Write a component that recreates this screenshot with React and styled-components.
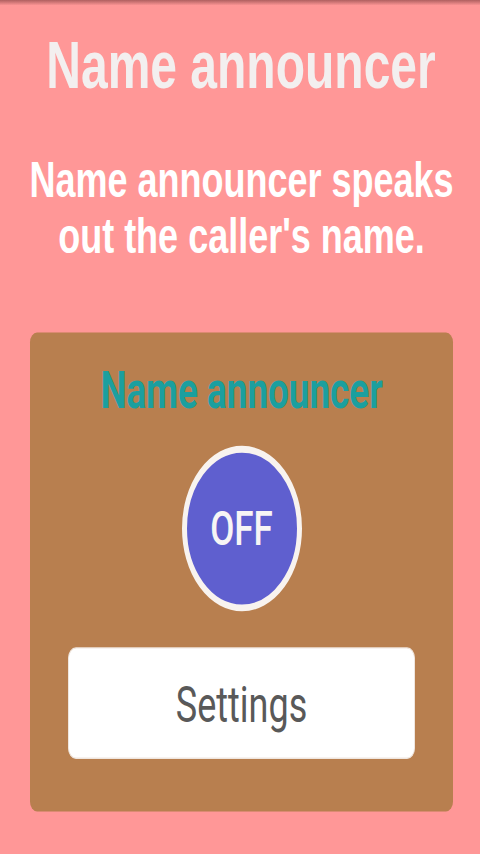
import React from 'react'
import styled, { createGlobalStyle } from 'styled-components'

// the reference is a phone screen stretched vertically, so the layout is
// built at its natural size and stretched by the same amount
const STRETCH = 1.38

const GlobalStyle = createGlobalStyle`
  html {
    overflow: hidden;
  }
  body {
    margin: 0;
    padding: 0;
    min-height: 854px;
    background: #ff9797;
  }
`

const Screen = styled.div`
  width: 480px;
  height: ${854 / STRETCH}px;
  display: flex;
  flex-direction: column;
  align-items: center;
  background: linear-gradient(to bottom, rgba(110, 50, 50, 0.55) 0px, rgba(255, 151, 151, 0) 4px), #ff9797;
  transform: scaleY(${STRETCH});
  transform-origin: top center;
  font-family: "Liberation Sans", Arial, sans-serif;
`

const Title = styled.h1`
  margin: 0;
  padding-top: 20px;
  padding-left: 2px;
  font-size: 48px;
  line-height: 56px;
  font-weight: bold;
  color: #f3efef;
  text-align: center;
`

const Subtitle = styled.p`
  margin: 35px 0 0;
  padding-left: 3px;
  font-size: 36px;
  line-height: 40px;
  font-weight: bold;
  color: #ffffff;
  text-align: center;
`

const Card = styled.section`
  margin: 50px 0 0 3px;
  width: 423px;
  flex-shrink: 0;
  box-sizing: border-box;
  padding: 21px 38px 38px;
  background: #b87f4f;
  border-radius: 7px;
  display: flex;
  flex-direction: column;
  align-items: center;
  font-family: Roboto, "Noto Sans", sans-serif;
`

const CardTitle = styled.h2`
  margin: 0;
  font-size: 37px;
  line-height: 44px;
  font-weight: bold;
  color: #1b9f9f;
  letter-spacing: -0.1px;
`

const Toggle = styled.button`
  margin-top: 17px;
  width: 120px;
  height: 120px;
  flex-shrink: 0;
  box-sizing: border-box;
  border-radius: 50%;
  border: 5px solid #f8f3ef;
  background: ${({ $on }) => ($on ? '#3faf6a' : '#5f5fcf')};
  color: #f7f5f5;
  font-family: Roboto, "Noto Sans", sans-serif;
  font-size: 35px;
  font-weight: 500;
  padding: 0;
  display: flex;
  align-items: center;
  justify-content: center;
`

const SettingsButton = styled.button`
  margin-top: 26px;
  width: 100%;
  height: 81px;
  flex-shrink: 0;
  box-sizing: border-box;
  border: 1px solid #efe6df;
  border-radius: 8px;
  background: #ffffff;
  color: #595959;
  font-family: Roboto, "Noto Sans", sans-serif;
  font-size: 36px;
  font-weight: normal;
  padding: 2px 0 0;
`

function App() {
    const on = false

    return (
        <>
            <GlobalStyle />
            <Screen>
                <Title>Name announcer</Title>
                <Subtitle>
                    Name announcer speaks<br />out the caller's name.
                </Subtitle>
                <Card>
                    <CardTitle>Name announcer</CardTitle>
                    <Toggle $on={on}>{on ? 'ON' : 'OFF'}</Toggle>
                    <SettingsButton>Settings</SettingsButton>
                </Card>
            </Screen>
        </>
    )
}

export default App
